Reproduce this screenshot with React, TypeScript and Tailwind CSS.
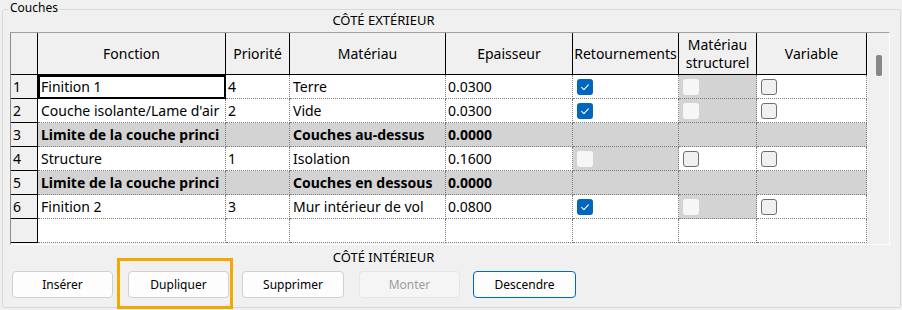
import React from "react";

type Box = "on" | "off" | "dis" | null;
type Row = {
  n: string;
  f: string;
  p: string;
  m: string;
  e: string;
  r: Box;
  s: Box;
  v: Box;
  bold?: boolean;
};

const rows: Row[] = [
  { n: "1", f: "Finition 1", p: "4", m: "Terre", e: "0.0300", r: "on", s: "dis", v: "off" },
  { n: "2", f: "Couche isolante/Lame d'air", p: "2", m: "Vide", e: "0.0300", r: "on", s: "dis", v: "off" },
  { n: "3", f: "Limite de la couche princi", p: "", m: "Couches au-dessus", e: "0.0000", r: null, s: null, v: null, bold: true },
  { n: "4", f: "Structure", p: "1", m: "Isolation", e: "0.1600", r: "dis", s: "off", v: "off" },
  { n: "5", f: "Limite de la couche princi", p: "", m: "Couches en dessous", e: "0.0000", r: null, s: null, v: null, bold: true },
  { n: "6", f: "Finition 2", p: "3", m: "Mur intérieur de vol", e: "0.0800", r: "on", s: "dis", v: "off" },
  { n: "", f: "", p: "", m: "", e: "", r: null, s: null, v: null },
];

function Check({ state }: { state: Box }) {
  if (state === "on")
    return (
      <div className="w-[16px] h-[16px] rounded-[3px] bg-[#0067c0] flex items-center justify-center">
        <svg width="16" height="16" viewBox="0 0 16 16">
          <path d="M4.6 8.4 L6.9 10.6 L11.4 5.8" fill="none" stroke="white" strokeWidth="1.1" strokeLinecap="round" strokeLinejoin="round" />
        </svg>
      </div>
    );
  if (state === "off")
    return <div className="w-[16px] h-[16px] rounded-[3px] bg-[#f0f0f0] border border-[#6f6f6f]" />;
  if (state === "dis") return <div className="w-[16px] h-[16px] rounded-[3px] bg-[#f6f6f6]" />;
  return null;
}

const cell =
  "h-[24px] border-r border-b border-dotted border-[#7c7c7c] flex items-center overflow-hidden whitespace-nowrap text-[14px] leading-[18px]";

function Button({ label, w, cls = "", disabled = false, primary = false }: { label: string; w: string; cls?: string; disabled?: boolean; primary?: boolean }) {
  return (
    <div
      className={`${w} ${cls} h-[27px] rounded-[4px] flex items-center justify-center text-[12px] ${
        primary
          ? "bg-[#fdfdfd] border-[1.5px] border-[#0067c0] text-black"
          : disabled
          ? "bg-[#f5f5f5] border border-[#e5e5e5] text-[#9d9d9d]"
          : "bg-[#fdfdfd] border border-[#d0d0d0] text-black"
      }`}
    >
      {label}
    </div>
  );
}

export default function App() {
  return (
    <div className="w-[902px] h-[310px] bg-[#f0f0f0] relative overflow-hidden font-['Noto_Sans',sans-serif] text-black pt-[9px] pl-[2px]">
      <div className="relative w-[899px] h-[299px] border border-[#d9d9d9] rounded-[3px] pl-[7px]">
        <span className="absolute left-[5px] -top-[10px] px-[2px] bg-[#f0f0f0] text-[12px] leading-[16px]">Couches</span>

        <div className="w-[747px] h-[22px] pb-[2px] flex items-center justify-center text-[13px] leading-[16px]">CÔTÉ EXTÉRIEUR</div>

        <div className="w-[880px] h-[213px] flex border-t border-l border-t-[#a0a0a0] border-l-[#8a8a8a] border-r border-b border-r-white border-b-white">
          <div className="w-[856px] grid grid-cols-[27px_188px_64px_156px_127px_106px_78px_110px] auto-rows-[24px] grid-rows-[42px]">
            <div className="h-[42px] bg-[#f0f0f0] border-r border-b border-black" />
            {["Fonction", "Priorité", "Matériau", "Epaisseur", "Retournements"].map((h) => (
              <div key={h} className="h-[42px] bg-[#f0f0f0] border-r border-b border-black flex items-center justify-center text-[14px] leading-[18px] whitespace-nowrap">
                {h}
              </div>
            ))}
            <div className="h-[42px] bg-[#f0f0f0] border-r border-b border-black flex items-center justify-center text-center text-[14px] leading-[18px]">
              Matériau
              <br />
              structurel
            </div>
            <div className="h-[42px] bg-[#f0f0f0] border-r border-b border-black flex items-center justify-center text-[14px] leading-[18px]">Variable</div>

            {rows.map((r, i) => {
              const bg = r.bold ? "bg-[#d3d3d3] font-bold" : "bg-white";
              return (
                <React.Fragment key={i}>
                  <div className="h-[24px] bg-[#f0f0f0] border-r border-b border-black flex items-center pl-[2px] text-[14px] leading-[18px]">{r.n}</div>
                  {i === 0 ? (
                    <div className="h-[24px] bg-white border-2 border-black flex items-center pl-[1px] text-[14px] leading-[18px] whitespace-nowrap overflow-hidden">{r.f}</div>
                  ) : (
                    <div className={`${cell} ${bg} pl-[3px]`}>{r.f}</div>
                  )}
                  <div className={`${cell} ${bg} pl-[2px]`}>{r.p}</div>
                  <div className={`${cell} ${bg} pl-[3px]`}>{r.m}</div>
                  <div className={`${cell} ${bg} pl-[2px]`}>{r.e}</div>
                  <div className={`${cell} ${r.bold || r.r === "dis" ? "bg-[#d3d3d3]" : "bg-white"} pl-[4px]`}>
                    <Check state={r.r} />
                  </div>
                  <div className={`${cell} ${r.bold || r.s === "dis" ? "bg-[#d3d3d3]" : "bg-white"} pl-[4px]`}>
                    <Check state={r.s} />
                  </div>
                  <div className={`${cell} ${r.bold ? "bg-[#d3d3d3]" : "bg-white"} pl-[4px]`}>
                    <Check state={r.v} />
                  </div>
                </React.Fragment>
              );
            })}
          </div>
          <div className="w-[22px] bg-[#f0f0f0] border-l border-[#f7f7f7] pl-[8px] pt-[22px]">
            <div className="w-[6px] h-[21px] rounded-[2px] bg-[#878787]" />
          </div>
        </div>

        <div className="w-[747px] h-[24px] flex items-center justify-center text-[13px] leading-[16px]">CÔTÉ INTÉRIEUR</div>

        <div className="flex mt-[2px] ml-[2px]">
          <Button label="Insérer" w="w-[101px]" />
          <Button label="Dupliquer" w="w-[101px]" cls="ml-[15px]" />
          <Button label="Supprimer" w="w-[102px]" cls="ml-[13px]" />
          <Button label="Monter" w="w-[101px]" cls="ml-[15px]" disabled />
          <Button label="Descendre" w="w-[103px]" cls="ml-[13px]" primary />
        </div>
      </div>

      <div className="absolute left-[117px] top-[258px] w-[116px] h-[51px] border-[3px] border-[#f5a800]" />
    </div>
  );
}
